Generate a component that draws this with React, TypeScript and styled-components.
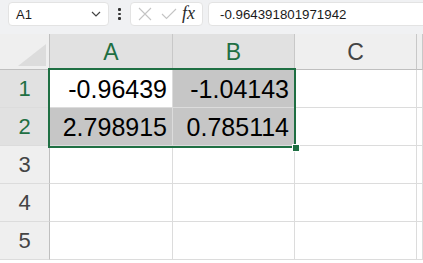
import React from "react";
import styled, { createGlobalStyle } from "styled-components";

const Global = createGlobalStyle`
  html, body { margin: 0; padding: 0; background: #ffffff; overflow: hidden; }
  body { font-family: "Liberation Sans", Arial, sans-serif; }
`;

const GREEN = "#1f6f43";

const Page = styled.div`
  width: 423px;
  height: 263px;
  display: flex;
  flex-direction: column;
  overflow: hidden;
`;

const Toolbar = styled.div`
  height: 34px;
  box-sizing: border-box;
  background: #f0f1f3;
  display: flex;
  align-items: flex-start;
  padding: 2px 0 0 8px;
  flex: none;
`;

const Box = styled.div<{ $w: number; $ml?: number }>`
  width: ${(p) => p.$w}px;
  height: 24px;
  margin-left: ${(p) => p.$ml ?? 0}px;
  box-sizing: border-box;
  background: #ffffff;
  border: 1px solid #e3e3e3;
  border-radius: 4px;
  display: flex;
  align-items: center;
  flex: none;
`;

const NameText = styled.span`
  font-size: 13px;
  color: #1a1a1a;
  margin-left: 7px;
  flex: 1;
`;

const Chevron = styled.svg`
  margin-right: 7px;
`;

const Kebab = styled.div`
  width: 21px;
  height: 24px;
  display: flex;
  flex-direction: column;
  align-items: center;
  justify-content: center;
  gap: 2px;
  flex: none;
`;

const Dot = styled.span`
  width: 2.5px;
  height: 2.5px;
  background: #333;
  border-radius: 1px;
`;

const BtnIcon = styled.div`
  width: 24px;
  height: 22px;
  display: flex;
  align-items: center;
  justify-content: center;
`;

const Fx = styled.span`
  font-family: "Liberation Serif", "Times New Roman", serif;
  font-style: italic;
  font-size: 18px;
  color: #2a2a2a;
  margin-left: 1px;
  margin-top: -2px;
`;

const FormulaText = styled.span`
  font-size: 13.3px;
  color: #1a1a1a;
  margin-left: 11px;
  white-space: nowrap;
`;

const SheetWrap = styled.div`
  position: relative;
  flex: 1;
`;

const Grid = styled.div`
  display: grid;
  grid-template-columns: 50px 123px 122px 122px 1fr;
  grid-template-rows: 36px repeat(5, 38px);
`;

const Corner = styled.div`
  background: #efefef;
  border-right: 1px solid #bfbfbf;
  border-bottom: 1px solid #bfbfbf;
  box-sizing: border-box;
  position: relative;
`;

const Triangle = styled.div`
  position: absolute;
  right: 3px;
  bottom: 3px;
  width: 0;
  height: 0;
  border-left: 28px solid transparent;
  border-bottom: 22px solid #dcdcdc;
`;

const ColHead = styled.div<{ $sel?: boolean }>`
  background: ${(p) => (p.$sel ? "#e1e1e1" : "#efefef")};
  border-right: 1px solid #c8c8c8;
  border-bottom: 1px solid #bfbfbf;
  box-sizing: border-box;
  display: flex;
  align-items: center;
  justify-content: center;
  font-size: 23px;
  padding-top: 2px;
  color: ${(p) => (p.$sel ? GREEN : "#444")};
`;

const RowHead = styled.div<{ $sel?: boolean }>`
  background: ${(p) => (p.$sel ? "#e1e1e1" : "#efefef")};
  border-right: 1px solid #bfbfbf;
  border-bottom: 1px solid #dcdcdc;
  box-sizing: border-box;
  display: flex;
  align-items: center;
  justify-content: center;
  font-size: 22px;
  color: ${(p) => (p.$sel ? GREEN : "#444")};
`;

const Cell = styled.div<{ $sel?: boolean; $active?: boolean }>`
  background: ${(p) => (p.$active ? "#ffffff" : p.$sel ? "#c6c6c6" : "#ffffff")};
  border-right: 1px solid #dcdcdc;
  border-bottom: 1px solid #dcdcdc;
  box-sizing: border-box;
  display: flex;
  align-items: center;
  justify-content: flex-end;
  padding-right: 5px;
  padding-top: 1px;
  font-size: 25px;
  color: #000;
`;

const Selection = styled.div`
  position: absolute;
  left: 48px;
  top: 34px;
  width: 248px;
  height: 80px;
  box-sizing: border-box;
  border: 2px solid ${GREEN};
  pointer-events: none;
`;

const Handle = styled.div`
  position: absolute;
  right: -6px;
  bottom: -6px;
  width: 6px;
  height: 6px;
  background: ${GREEN};
  border: 1px solid #fff;
`;

const rows = [1, 2, 3, 4, 5];
const data: Record<number, [string, string]> = {
  1: ["-0.96439", "-1.04143"],
  2: ["2.798915", "0.785114"],
};

export default function App() {
  return (
    <Page>
      <Global />
      <Toolbar>
        <Box $w={101}>
          <NameText>A1</NameText>
          <Chevron width="10" height="6" viewBox="0 0 10 6">
            <path d="M1 1 L5 5 L9 1" fill="none" stroke="#444" strokeWidth="1.2" />
          </Chevron>
        </Box>
        <Kebab>
          <Dot />
          <Dot />
          <Dot />
        </Kebab>
        <Box $w={73}>
          <BtnIcon style={{ marginLeft: 2 }}>
            <svg width="14" height="14" viewBox="0 0 14 14">
              <path d="M1 1 L13 13 M13 1 L1 13" stroke="#c4c4c4" strokeWidth="1.1" fill="none" />
            </svg>
          </BtnIcon>
          <BtnIcon>
            <svg width="16" height="12" viewBox="0 0 16 12">
              <path d="M1 6 L5.5 10.5 L15 1" stroke="#c4c4c4" strokeWidth="1.1" fill="none" />
            </svg>
          </BtnIcon>
          <Fx>fx</Fx>
        </Box>
        <Box $w={230} $ml={5}>
          <FormulaText>-0.964391801971942</FormulaText>
        </Box>
      </Toolbar>
      <SheetWrap>
        <Grid>
          <Corner>
            <Triangle />
          </Corner>
          <ColHead $sel>A</ColHead>
          <ColHead $sel>B</ColHead>
          <ColHead>C</ColHead>
          <ColHead />
          {rows.map((r) => (
            <React.Fragment key={r}>
              <RowHead $sel={r <= 2}>{r}</RowHead>
              <Cell $sel={r <= 2} $active={r === 1}>{data[r]?.[0]}</Cell>
              <Cell $sel={r <= 2}>{data[r]?.[1]}</Cell>
              <Cell />
              <Cell />
            </React.Fragment>
          ))}
        </Grid>
        <Selection>
          <Handle />
        </Selection>
      </SheetWrap>
    </Page>
  );
}
